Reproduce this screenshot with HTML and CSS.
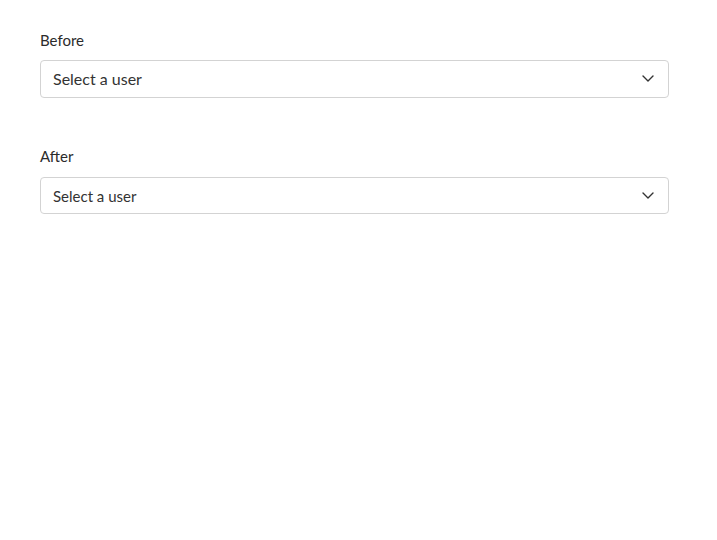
FILE: index.html
```html
<!DOCTYPE html>
<html>
<head>
<meta charset="utf-8">
<link rel="stylesheet" href="styles.css">
</head>
<body>
<div class="form">
  <div class="field">
    <label class="label">Before</label>
    <div class="select">
      <span class="value">Select a user</span>
      <svg class="chevron" width="12" height="7" viewBox="0 0 12 7"><path d="M1 1l5 5 5-5" fill="none" stroke="#333" stroke-width="1.4" stroke-linecap="round" stroke-linejoin="round"/></svg>
    </div>
  </div>
  <div class="field field-after">
    <label class="label">After</label>
    <div class="select">
      <span class="value">Select a user</span>
      <svg class="chevron" width="12" height="7" viewBox="0 0 12 7"><path d="M1 1l5 5 5-5" fill="none" stroke="#333" stroke-width="1.4" stroke-linecap="round" stroke-linejoin="round"/></svg>
    </div>
  </div>
</div>
</body>
</html>
```
FILE: styles.css
```css
html, body { margin: 0; padding: 0; background: #fff; }
body { font-family: Lato, "Open Sans", sans-serif; color: #2b2b2b; }
.form { padding: 30px 48px 0 40px; display: flex; flex-direction: column; gap: 48px; }
.field { display: flex; flex-direction: column; }
.label { font-size: 15px; line-height: 20px; margin-bottom: 10px; color: #2b2b2b; }
.field-after .label { margin-bottom: 11px; }
.select { height: 38px; box-sizing: border-box; border: 1px solid #d3d3d3; border-radius: 4px; display: flex; align-items: center; justify-content: space-between; padding: 0 14px 0 12px; }
.field-after .select { height: 37px; }
.value { font-size: 16px; line-height: 20px; color: #333; }
.field-after .value { font-size: 15px; }
.chevron { display: block; margin-top: -1px; }
```
